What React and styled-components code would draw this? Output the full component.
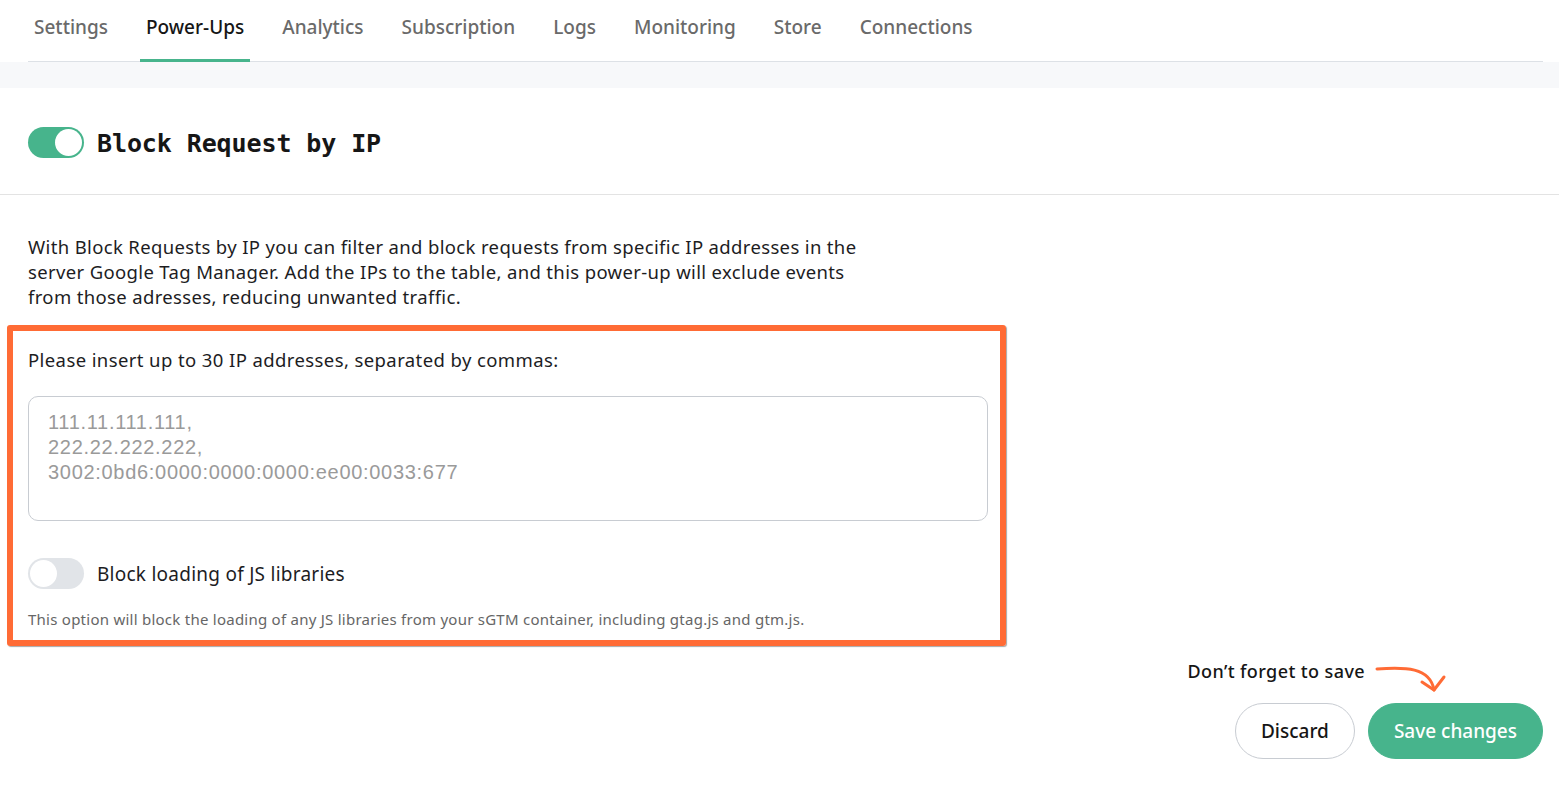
import React from "react";
import styled, { createGlobalStyle } from "styled-components";

const Global = createGlobalStyle`
  html, body { margin: 0; padding: 0; background: #fff; }
  body { font-family: "Noto Sans", "Open Sans", sans-serif; color: #1d1d1f; }
  * { box-sizing: border-box; }
`;

const Page = styled.div`
  width: 1559px;
  min-height: 789px;
  display: flex;
  flex-direction: column;
`;

const Nav = styled.nav`
  display: flex;
  gap: 26px;
  margin: 0 16px 0 28px;
  border-bottom: 1px solid #dde1e6;
`;

const Tab = styled.div`
  height: 62px;
  display: flex;
  align-items: center;
  padding: 0 6px 6px;
  font-size: 19px;
  color: ${(p) => (p.$active ? "#161616" : "#6a6a6a")};
  font-weight: 500;
  border-bottom: 3px solid ${(p) => (p.$active ? "#47b48c" : "transparent")};
  margin-bottom: -1px;
`;

const Band = styled.div`
  height: 26px;
  background: #f7f8fa;
`;

const HeaderRow = styled.div`
  display: flex;
  align-items: center;
  gap: 13px;
  height: 107px;
  padding: 2px 28px 0;
  border-bottom: 1px solid #e3e3e3;
`;

const Toggle = styled.div`
  width: 56px;
  height: 31px;
  border-radius: 16px;
  background: ${(p) => (p.$on ? "#47b48c" : "#e1e4e8")};
  position: relative;
  flex-shrink: 0;
  &::after {
    content: "";
    position: absolute;
    top: 2px;
    left: ${(p) => (p.$on ? "27px" : "2px")};
    width: 27px;
    height: 27px;
    border-radius: 50%;
    background: #fff;
  }
`;

const Heading = styled.h2`
  margin: 0;
  padding-top: 2px;
  font-family: "DejaVu Sans Mono", "Liberation Mono", monospace;
  font-weight: 700;
  font-size: 25px;
  letter-spacing: -0.1px;
  color: #161616;
`;

const Section = styled.section`
  padding: 39px 28px 0;
  display: flex;
  flex-direction: column;
`;

const Intro = styled.p`
  margin: 0;
  width: 850px;
  font-size: 18.5px;
  letter-spacing: 0.35px;
  line-height: 25px;
  color: #1d1d1f;
`;

const Highlight = styled.div`
  margin: 16px 0 0 -21px;
  width: 999px;
  border: 6px solid #ff6b35;
  border-radius: 3px;
  padding: 16px 12px 11px 15px;
  box-shadow: 1px 1px 1px rgba(60, 60, 60, 0.45);
  display: flex;
  flex-direction: column;
`;

const Label = styled.div`
  font-size: 18.5px;
  letter-spacing: 0.4px;
  line-height: 25px;
  color: #1d1d1f;
`;

const IpArea = styled.textarea`
  margin-top: 24px;
  height: 125px;
  width: 100%;
  resize: none;
  border: 1px solid #c8ccd2;
  border-radius: 10px;
  padding: 13px 19px;
  font-family: "Liberation Sans", Arial, sans-serif;
  font-size: 20px;
  letter-spacing: 0.7px;
  line-height: 25px;
  color: #333;
  outline: none;
  &::placeholder { color: #9a9a9a; }
`;

const OptionRow = styled.div`
  margin-top: 37px;
  display: flex;
  align-items: center;
  gap: 13px;
  font-size: 19px;
  letter-spacing: 0.25px;
  color: #1d1d1f;
`;

const Note = styled.div`
  margin-top: 20px;
  font-size: 15px;
  letter-spacing: 0.25px;
  line-height: 20px;
  color: #666;
`;

const Footer = styled.div`
  display: flex;
  flex-direction: column;
  align-items: flex-end;
  padding: 13px 16px 0 0;
`;

const Hint = styled.div`
  display: flex;
  align-items: flex-start;
  gap: 10px;
  margin-right: 96px;
  font-size: 18px;
  letter-spacing: 0.4px;
  font-weight: 500;
  color: #161616;
  line-height: 25px;
`;

const Buttons = styled.div`
  display: flex;
  gap: 13px;
  margin-top: 8px;
`;

const Button = styled.button`
  height: 56px;
  border-radius: 28px;
  padding: 0 25px;
  font-family: "Noto Sans", sans-serif;
  font-size: 19px;
  font-weight: 500;
  cursor: pointer;
  border: 1px solid ${(p) => (p.$primary ? "#47b48c" : "#c8ccd2")};
  background: ${(p) => (p.$primary ? "#47b48c" : "#fff")};
  color: ${(p) => (p.$primary ? "#fff" : "#161616")};
`;

const tabs = ["Settings", "Power-Ups", "Analytics", "Subscription", "Logs", "Monitoring", "Store", "Connections"];

export default function App() {
  return (
    <Page>
      <Global />
      <Nav>
        {tabs.map((t) => (
          <Tab key={t} $active={t === "Power-Ups"}>{t}</Tab>
        ))}
      </Nav>
      <Band />
      <HeaderRow>
        <Toggle $on />
        <Heading>Block Request by IP</Heading>
      </HeaderRow>
      <Section>
        <Intro>
          With Block Requests by IP you can filter and block requests from specific IP addresses in the
          server Google Tag Manager. Add the IPs to the table, and this power-up will exclude events
          from those adresses, reducing unwanted traffic.
        </Intro>
        <Highlight>
          <Label>Please insert up to 30 IP addresses, separated by commas:</Label>
          <IpArea
            placeholder={"111.11.111.111,\n222.22.222.222,\n3002:0bd6:0000:0000:0000:ee00:0033:677"}
          />
          <OptionRow>
            <Toggle />
            <span>Block loading of JS libraries</span>
          </OptionRow>
          <Note>
            This option will block the loading of any JS libraries from your sGTM container, including gtag.js and gtm.js.
          </Note>
        </Highlight>
      </Section>
      <Footer>
        <Hint>
          <span>Don’t forget to save</span>
          <svg width="72" height="36" viewBox="0 0 72 36" fill="none">
            <path d="M2 10 C 30 8, 55 8, 59 31" stroke="#ff6b35" strokeWidth="3" strokeLinecap="round" />
            <path d="M47 23 L59 31 L69 18" stroke="#ff6b35" strokeWidth="3" strokeLinecap="round" strokeLinejoin="round" />
          </svg>
        </Hint>
        <Buttons>
          <Button>Discard</Button>
          <Button $primary>Save changes</Button>
        </Buttons>
      </Footer>
    </Page>
  );
}
